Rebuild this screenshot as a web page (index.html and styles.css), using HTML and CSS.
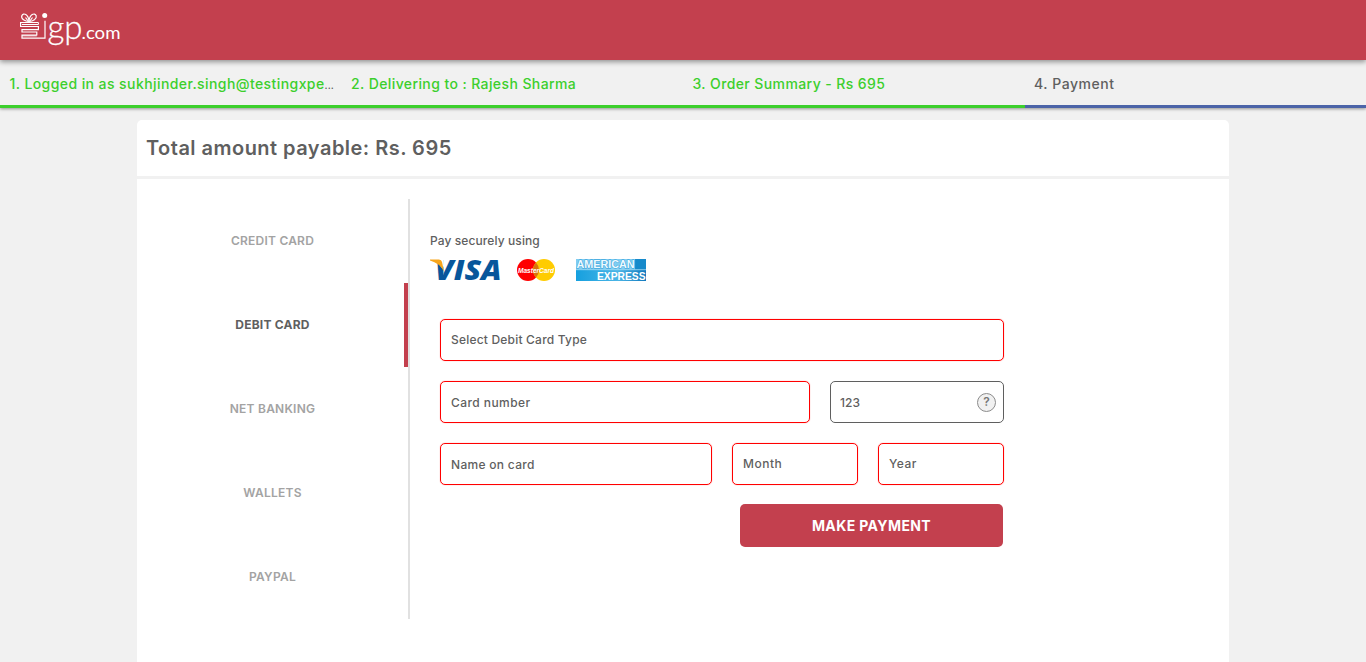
FILE: index.html
```html
<!DOCTYPE html>
<html lang="en">
<head>
<meta charset="utf-8">
<title>Payment - igp.com</title>
<link rel="stylesheet" href="styles.css">
</head>
<body>
<header class="topbar">
  <svg class="logo" width="102" height="38" viewBox="0 0 102 38" role="img" aria-label="igp.com">
    <g fill="none" stroke="#fff" stroke-width="1.2">
      <path d="M9 10.500C5 10.500 .8 8 1.800 4.800C3.300 1 8.500 3.500 9 10.500C9.500 3.500 14.700 1 16.200 4.800C17 8 13 10.500 9 10.500Z"/>
      <path d="M8.500 10.500L5.500 6.500M9.500 10.500L12.500 6.500"/>
      <path d="M18.400 11.500H.6V15.500H18.400V18.600H2V21H16.800V24H2V27.200H25V9.800"/>
      <path d="M2 13.500H18.400V11.500M2 24.800H16.800" stroke-width="1"/>
    </g>
    <circle cx="24.700" cy="4.500" r="2.500" fill="#fff"/>
    <text class="logo-main" y="27.500" x="27.500" textLength="35" lengthAdjust="spacingAndGlyphs">gp</text>
    <text class="logo-dom" x="61.500" y="27.500" textLength="39" lengthAdjust="spacingAndGlyphs">.com</text>
  </svg>
</header>
<nav class="steps">
  <div class="step first"><span>1. Logged in as sukhjinder.singh@testingxpe</span><span class="dots">...</span></div>
  <div class="step"><span>2. Delivering to : Rajesh Sharma</span></div>
  <div class="step"><span>3. Order Summary - Rs 695</span></div>
  <div class="step current"><span>4. Payment</span></div>
</nav>
<main class="panel">
  <h1 class="total"><span>Total amount payable: Rs. 695</span></h1>
  <div class="body">
    <ul class="methods">
      <li><span>CREDIT CARD</span></li>
      <li class="active"><span>DEBIT CARD</span></li>
      <li><span>NET BANKING</span></li>
      <li><span>WALLETS</span></li>
      <li><span>PAYPAL</span></li>
    </ul>
    <section class="content">
      <p class="secure">Pay securely using</p>
      <div class="brands">
        <svg width="70" height="22" viewBox="0 0 70 22">
          <text class="visa" x="5" y="21.300" textLength="66.500" lengthAdjust="spacingAndGlyphs">VISA</text>
          <path d="M5 0H13L14 7L12 9Z" fill="#fff"/>
          <path d="M0 .5H9Q11.500 .5 12 3L14 12.500Q9.500 4 0 1.500Z" fill="#f7a51c"/>
        </svg>
        <svg class="mc" width="38" height="22" viewBox="0 0 38 22">
          <circle cx="11" cy="11" r="11" fill="#f00"/>
          <circle cx="27" cy="11" r="11" fill="#fc0"/>
          <path d="M19 3.450A11 11 0 0 1 19 18.550A11 11 0 0 1 19 3.450Z" fill="#d9730c"/>
          <text class="mc-text" x="1" y="13.500" textLength="36" lengthAdjust="spacingAndGlyphs">MasterCard</text>
        </svg>
        <svg class="amex" width="70" height="22" viewBox="0 0 70 22">
          <defs><linearGradient id="ax" x1="0" y1="0" x2="1" y2="0"><stop offset="0" stop-color="#16a0df"/><stop offset=".6" stop-color="#4bb5e6"/><stop offset="1" stop-color="#1279be"/></linearGradient></defs>
          <rect width="70" height="22" fill="url(#ax)"/>
          <rect width="59" height="10.500" fill="#7fcdf2"/>
          <path d="M0 10.700H70" stroke="#a5dcf5" stroke-width=".8"/>
          <rect x="59.500" width="10.500" height="10" fill="#168acb"/>
          <text class="amex-text top" x=".5" y="9.300" textLength="58" lengthAdjust="spacingAndGlyphs">AMERICAN</text>
          <text class="amex-text" x="21" y="20.500" textLength="48.500" lengthAdjust="spacingAndGlyphs">EXPRESS</text>
        </svg>
      </div>
      <form class="form">
        <div class="row"><div class="field err type select"><span>Select Debit Card Type</span></div></div>
        <div class="row">
          <div class="field err number"><span>Card number</span></div>
          <div class="field cvv"><span>123</span><i class="help">?</i></div>
        </div>
        <div class="row">
          <div class="field err name"><span>Name on card</span></div>
          <div class="field err date select"><span>Month</span></div>
          <div class="field err date select"><span>Year</span></div>
        </div>
        <button type="button" class="pay"><span>MAKE PAYMENT</span></button>
      </form>
    </section>
  </div>
</main>
</body>
</html>
```
FILE: styles.css
```css
* { box-sizing: border-box; }
body {
  margin: 0;
  height: 662px;
  overflow: hidden;
  display: flex;
  flex-direction: column;
  background: #f1f1f1;
  color: #5f5f5f;
  font-family: Inter, "Open Sans", sans-serif;
  font-weight: 500;
  font-size: 12px;
}
.topbar {
  flex: none;
  height: 60px;
  padding: 11px 20px;
  background: #c3404e;
  box-shadow: 0 2px 5px rgba(0, 0, 0, .4);
  position: relative;
}
.logo { display: block; overflow: visible; }
.logo-main { font: 300 34px Lato, sans-serif; fill: #fff; stroke: #fff; stroke-width: .3px; }
.logo-dom { font: 400 18px Lato, sans-serif; fill: #fff; }
.steps {
  flex: none;
  display: grid;
  grid-template-columns: repeat(4, minmax(0, 1fr));
  height: 48px;
  box-shadow: 0 1px 3px rgba(0, 0, 0, .4);
}
.step {
  height: 48px;
  padding: 1px 0 0 9.5px;
  border-bottom: 3px solid #3ccf2c;
  color: #3ccf2c;
  font-size: 14px;
  line-height: 46px;
  letter-spacing: .4px;
  white-space: nowrap;
}
.step.first { letter-spacing: .42px; }
.step.current { border-color: #4c64a8; color: #5f5f5f; letter-spacing: .55px; }
.step .dots { color: #5f5f5f; font-size: 10px; letter-spacing: 0; }
.panel {
  flex: 1;
  width: 1092px;
  margin: 12px auto 0;
  background: #fff;
  border-radius: 5px 5px 0 0;
}
.total {
  margin: 0;
  height: 59px;
  padding-left: 9px;
  border-bottom: 3px solid #f1f1f1;
  font-size: 20px;
  font-weight: 600;
  line-height: 56px;
  letter-spacing: .47px;
}
.body { display: flex; padding-top: 20px; }
.methods {
  list-style: none;
  margin: 0;
  padding: 0;
  width: 273px;
  border-right: 2px solid #e1e1e1;
  font-weight: 600;
  color: #a3a3a3;
  letter-spacing: .23px;
}
.methods li {
  height: 84px;
  line-height: 84px;
  text-align: center;
  border-right: 4px solid transparent;
  padding-left: 4px;
}
.methods .active { color: #5f5f5f; font-weight: 700; border-color: #c3404e; }
.content { padding: 33px 0 0 20px; }
.secure { margin: 0; line-height: 18px; letter-spacing: .1px; }
.brands { display: flex; margin-top: 9px; }
.brands svg { display: block; overflow: visible; }
.mc { margin-left: 17px; }
.amex { margin-left: 21px; }
.visa { font: italic 800 28px "Open Sans", sans-serif; fill: #07569b; }
.mc-text { font: italic 700 6.5px "Liberation Sans", sans-serif; fill: #fff; }
.amex-text { font: 700 10.5px/1 "Liberation Sans", sans-serif; fill: #fff; }
.amex-text.top { fill: #eefaff; stroke: #2a9bd8; stroke-width: .8px; paint-order: stroke; }
.form { display: flex; flex-direction: column; gap: 20px; width: 564px; margin: 38px 0 0 10px; }
.row { display: flex; gap: 20px; }
.field {
  height: 42px;
  flex: none;
  display: flex;
  align-items: center;
  justify-content: space-between;
  padding: 0 7px 0 10px;
  border: 1px solid #5f5f5f;
  border-radius: 5px;
  letter-spacing: .3px;
}
.select { padding-bottom: 2px; }
.err { border-color: #f00; box-shadow: 0 0 1px rgba(255, 0, 0, .6); }
.type { width: 564px; letter-spacing: .2px; }
.number { width: 370px; letter-spacing: .43px; }
.cvv { width: 174px; padding-left: 9px; letter-spacing: 0; }
.name { width: 272px; }
.date { width: 126px; letter-spacing: .5px; }
.help {
  width: 19px;
  height: 19px;
  border: 1.5px solid #8c8c8c;
  border-radius: 50%;
  background: #f1f1f1;
  font-style: normal;
  font-weight: 600;
  line-height: 16px;
  text-align: center;
  color: #777;
}
.pay {
  align-self: flex-end;
  width: 263px;
  height: 43px;
  margin: -1px 1px 0 0;
  border: 0;
  border-radius: 5px;
  background: #c3404e;
  color: #fff;
  font: 700 14px Inter, sans-serif;
  letter-spacing: .4px;
}
```
